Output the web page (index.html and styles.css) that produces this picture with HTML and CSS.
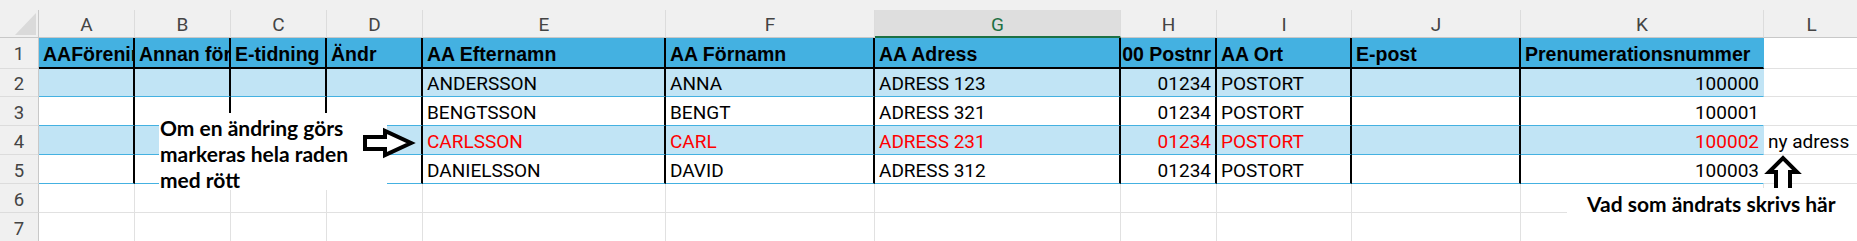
FILE: index.html
```html
<!DOCTYPE html>
<html lang="sv">
<head>
<meta charset="utf-8">
<title>Medlemslista</title>
<link rel="stylesheet" href="styles.css">
</head>
<body>
<div class="app">
  <div class="topband"></div>
  <div class="sheet">
    <!-- column headers -->
    <div class="corner"><svg width="39" height="28" viewBox="0 0 39 28"><polygon points="36,3 36,25 15,25" fill="#dadada"/></svg></div>
    <div class="ch">A</div><div class="ch">B</div><div class="ch">C</div><div class="ch">D</div>
    <div class="ch">E</div><div class="ch">F</div><div class="ch sel">G</div><div class="ch">H</div>
    <div class="ch">I</div><div class="ch">J</div><div class="ch">K</div><div class="ch">L</div>

    <!-- row 1 -->
    <div class="rn rn1">1</div>
    <div class="c h vr">AAFöreningsnummer</div>
    <div class="c h vr">Annan förening</div>
    <div class="c h vr">E-tidning</div>
    <div class="c h vr">Ändr</div>
    <div class="c h vr">AA Efternamn</div>
    <div class="c h vr">AA Förnamn</div>
    <div class="c h vr">AA Adress</div>
    <div class="c h vr num">00 Postnr</div>
    <div class="c h vr">AA Ort</div>
    <div class="c h vr">E-post</div>
    <div class="c h">Prenumerationsnummer</div>
    <div class="c"></div>

    <!-- row 2 -->
    <div class="rn">2</div>
    <div class="c t b vr"></div>
    <div class="c t b vr"></div>
    <div class="c t b vr"></div>
    <div class="c t b vr"></div>
    <div class="c t b vr">ANDERSSON</div>
    <div class="c t b vr">ANNA</div>
    <div class="c t b vr">ADRESS 123</div>
    <div class="c t b vr num">01234</div>
    <div class="c t b vr">POSTORT</div>
    <div class="c t b vr"></div>
    <div class="c t b num">100000</div>
    <div class="c"></div>

    <!-- row 3 -->
    <div class="rn">3</div>
    <div class="c t vr"></div>
    <div class="c t vr"></div>
    <div class="c t vr"></div>
    <div class="c t vr"></div>
    <div class="c t vr">BENGTSSON</div>
    <div class="c t vr">BENGT</div>
    <div class="c t vr">ADRESS 321</div>
    <div class="c t vr num">01234</div>
    <div class="c t vr">POSTORT</div>
    <div class="c t vr"></div>
    <div class="c t num">100001</div>
    <div class="c"></div>

    <!-- row 4 -->
    <div class="rn">4</div>
    <div class="c t b vr"></div>
    <div class="c t b vr"></div>
    <div class="c t b vr"></div>
    <div class="c t b vr"></div>
    <div class="c t b vr red">CARLSSON</div>
    <div class="c t b vr red">CARL</div>
    <div class="c t b vr red">ADRESS 231</div>
    <div class="c t b vr num red">01234</div>
    <div class="c t b vr red">POSTORT</div>
    <div class="c t b vr"></div>
    <div class="c t b num red">100002</div>
    <div class="c">ny adress</div>

    <!-- row 5 -->
    <div class="rn">5</div>
    <div class="c t vr"></div>
    <div class="c t vr"></div>
    <div class="c t vr"></div>
    <div class="c t vr"></div>
    <div class="c t vr">DANIELSSON</div>
    <div class="c t vr">DAVID</div>
    <div class="c t vr">ADRESS 312</div>
    <div class="c t vr num">01234</div>
    <div class="c t vr">POSTORT</div>
    <div class="c t vr"></div>
    <div class="c t num">100003</div>
    <div class="c"></div>

    <!-- row 6 -->
    <div class="rn">6</div>
    <div class="c"></div><div class="c"></div><div class="c"></div><div class="c"></div>
    <div class="c"></div><div class="c"></div><div class="c"></div><div class="c"></div>
    <div class="c"></div><div class="c"></div><div class="c"></div><div class="c"></div>

    <!-- row 7 -->
    <div class="rn">7</div>
    <div class="c"></div><div class="c"></div><div class="c"></div><div class="c"></div>
    <div class="c"></div><div class="c"></div><div class="c"></div><div class="c"></div>
    <div class="c"></div><div class="c"></div><div class="c"></div><div class="c"></div>
  </div>

  <!-- overlays: text boxes and arrows drawn on top of the sheet -->
  <div class="note note-left">Om en ändring görs<br>markeras hela raden<br>med rött</div>
  <svg class="arrow-right" width="56" height="32" viewBox="0 0 56 32">
    <polygon points="5,10 25,10 25,4 51,16 25,28 25,22 5,22" fill="#fff" stroke="#000" stroke-width="4" stroke-linejoin="miter"/>
  </svg>
  <svg class="arrow-up" width="42" height="44" viewBox="0 0 42 44">
    <polygon points="14,44 14,20 7,20 21,6 35,20 28,20 28,44" fill="#fff" stroke="#000" stroke-width="4" stroke-linejoin="miter"/>
  </svg>
  <div class="note note-right">Vad som ändrats skrivs här</div>
</div>
</body>
</html>
```

FILE: styles.css
```css
html, body {
  margin: 0;
  padding: 0;
}

body {
  width: 1857px;
  height: 241px;
  overflow: hidden;
  background: #ffffff;
  font-family: Roboto, "Liberation Sans", sans-serif;
}

.app {
  position: relative;
  width: 1857px;
  height: 241px;
  overflow: hidden;
}

.topband {
  height: 10px;
  background: #f0f0f0;
}

.sheet {
  display: grid;
  grid-template-columns: 39px 96px 96px 96px 96px 243px 209px 246px 96px 135px 169px 243px 96px;
  grid-template-rows: 28px 31px 28px repeat(6, 29px);
}

/* header strip */
.corner {
  background: #f0f0f0;
  border-right: 1px solid #c8c8c8;
  border-bottom: 1px solid #c8c8c8;
  box-sizing: border-box;
  overflow: hidden;
}

.corner svg {
  display: block;
}

.ch {
  box-sizing: border-box;
  background: #f0f0f0;
  border-right: 1px solid #dcdcdc;
  border-bottom: 1px solid #c8c8c8;
  display: flex;
  align-items: flex-end;
  justify-content: center;
  padding-bottom: 1px;
  font-family: Roboto, sans-serif;
  font-size: 19px;
  line-height: 22px;
  color: #444444;
}

.ch.sel {
  background: #dedede;
  border-bottom: 2px solid #1e7145;
  padding-bottom: 0;
  color: #1e7145;
}

.rn {
  box-sizing: border-box;
  background: #f0f0f0;
  border-right: 1px solid #c8c8c8;
  border-bottom: 1px solid #dcdcdc;
  display: flex;
  align-items: flex-end;
  justify-content: center;
  padding-bottom: 1px;
  font-family: Roboto, sans-serif;
  font-size: 18.5px;
  line-height: 22px;
  color: #444444;
}

.rn1 {
  padding-bottom: 3px;
}

/* cells */
.c {
  box-sizing: border-box;
  background: #ffffff;
  border-right: 1px solid #e1e1e1;
  border-bottom: 1px solid #e1e1e1;
  display: flex;
  align-items: flex-end;
  justify-content: flex-start;
  padding: 0 4px 1px 4px;
  font-family: Roboto, sans-serif;
  font-size: 19px;
  line-height: 22px;
  color: #000000;
  white-space: nowrap;
  overflow: hidden;
}

.h {
  background: #44b1e1;
  border-right-color: transparent;
  border-bottom: 2px solid #000000;
  padding-bottom: 2px;
  font-family: "Liberation Sans", Arial, sans-serif;
  font-weight: bold;
  font-size: 19.5px;
}

.t {
  border-right-color: transparent;
  border-bottom-color: #44b1e1;
}

.b {
  background: #c1e4f5;
}

.c.vr {
  border-right: 2px solid #000000;
}

.num {
  justify-content: flex-end;
  padding-right: 4px;
}

.red {
  color: #ff0000;
}

/* overlays */
.note {
  position: absolute;
  box-sizing: border-box;
  background: #ffffff;
  font-family: Lato, "Open Sans", sans-serif;
  font-weight: 700;
  font-size: 21px;
  line-height: 26px;
  color: #000000;
  white-space: nowrap;
  overflow: hidden;
}

.note-left {
  left: 159px;
  top: 113px;
  width: 228px;
  height: 77px;
  padding: 2px 0 0 1px;
}

.note-right {
  left: 1567px;
  top: 188px;
  width: 290px;
  height: 53px;
  padding: 3px 0 0 20px;
}

.arrow-right {
  position: absolute;
  left: 360px;
  top: 127px;
}

.arrow-up {
  position: absolute;
  left: 1762px;
  top: 152px;
}
```
